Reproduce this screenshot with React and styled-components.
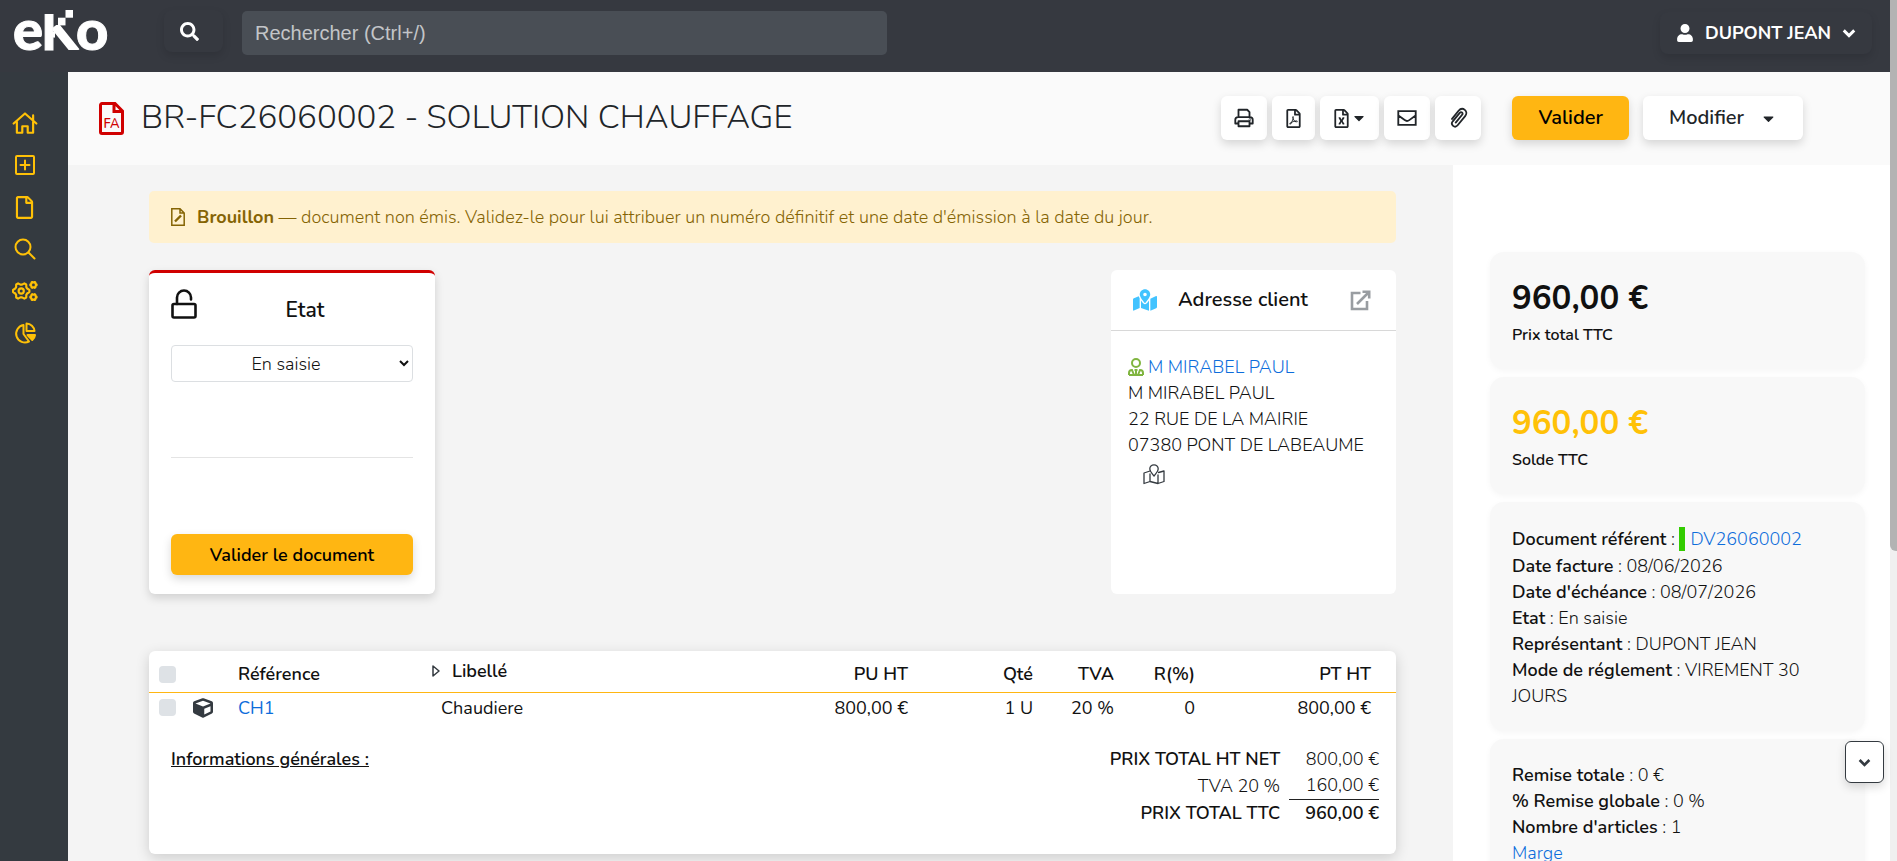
import React, { useState } from 'react';
import styled, { createGlobalStyle, css } from 'styled-components';
import {
  FaCaretDown,
  FaCube,
  FaMapMarkedAlt,
  FaRegFile,
  FaRegFileExcel,
  FaRegFilePdf,
  FaSearch,
  FaUser,
} from 'react-icons/fa';

const GlobalStyle = createGlobalStyle`
  :root {
    --dark: #343a40;
    --topbar: #363940;
    --yellow: #ffb612;
    --gold: #ffc107;
    --red: #d00000;
    --link: #0d6ddb;
    --text: #111;
  }

  *, *::before, *::after {
    box-sizing: border-box;
  }

  body {
    margin: 0;
    color: var(--text);
    background-color: #f4f4f4;
    font-family: Nunito, Lato, sans-serif;
    font-size: 18px;
    font-weight: 300;
    line-height: 26px;
  }

  button, input, select {
    font: inherit;
    color: inherit;
  }

  b {
    font-weight: 600;
  }

  a {
    color: var(--link);
    text-decoration: none;
  }

  svg {
    display: block;
    flex: none;
  }
`;

/* ---------- icons ---------- */

const Stroke = ({ size = 24, width = 2, children, ...rest }) => (
  <svg
    width={size}
    height={size}
    viewBox="0 0 24 24"
    fill="none"
    stroke="currentColor"
    strokeWidth={width}
    strokeLinejoin="round"
    strokeLinecap="round"
    aria-hidden="true"
    {...rest}
  >
    {children}
  </svg>
);

const HomeIcon = () => (
  <Stroke size={26}>
    <path d="M1.500 12.500 12 3.200l10.500 9.300M4.500 10.500V21h5v-6h5v6h5V10.500M19.500 9.500V5" />
  </Stroke>
);

const PlusSquareIcon = () => (
  <Stroke>
    <rect x="3" y="3" width="18" height="18" rx="1" />
    <path d="M12 7.500v9M7.500 12h9" />
  </Stroke>
);

const SearchIcon = () => (
  <Stroke>
    <circle cx="10" cy="10" r="7.500" />
    <path d="m15.500 15.500 6 6" />
  </Stroke>
);

const gear = (cx, cy, r, teeth) => {
  const points = [];
  for (let i = 0; i < teeth * 4; i += 1) {
    const angle = ((i - 0.5) / (teeth * 4)) * Math.PI * 2;
    const radius = i % 4 < 2 ? r : r * 0.78;
    points.push(`${(cx + radius * Math.cos(angle)).toFixed(2)} ${(cy + radius * Math.sin(angle)).toFixed(2)}`);
  }
  return `M${points.join('L')}Z`;
};

const CogsIcon = () => (
  <Stroke size={26} width={2}>
    <path d={gear(8.5, 12, 7.6, 6)} />
    <circle cx="8.500" cy="12" r="2.400" />
    <path d={gear(19.8, 6.4, 2.9, 6)} />
    <path d={gear(19.8, 17.6, 2.9, 6)} />
  </Stroke>
);

const PieIcon = () => (
  <Stroke>
    <path d="M10.500 4A8.800 8.800 0 1 0 16 20.500L10.500 13Z" />
    <path d="M13.500 2.500V10H21.500A8.300 8.300 0 0 0 13.500 2.500Z" />
    <path d="M14.500 14h7.500a8 8 0 0 1-2.700 5Z" fill="currentColor" />
  </Stroke>
);

const LockOpenIcon = () => (
  <svg width="26" height="30" viewBox="0 0 26 30" fill="none" stroke="currentColor" strokeWidth="2.600" aria-hidden="true">
    <rect x="1.500" y="15" width="23" height="13.500" rx="1.500" />
    <path d="M6 15V8.500a7 7 0 0 1 14 0V10.500" strokeLinecap="round" />
  </svg>
);

const ChevronIcon = ({ size = 14 }) => (
  <Stroke size={size} width={5} strokeLinejoin="miter" strokeLinecap="butt">
    <path d="m3 7.500 9 9 9-9" />
  </Stroke>
);

const PrintIcon = () => (
  <Stroke size={22}>
    <path d="M6 11V3h9.500L18 5.500V11M5 18H2.500v-4A3 3 0 0 1 5.500 11h13a3 3 0 0 1 3 3v4H19M6 15.500h12V21H6Z" />
    <circle cx="18.400" cy="13.600" r="0.300" />
  </Stroke>
);

const MailIcon = () => (
  <Stroke size={22} strokeLinejoin="miter">
    <path d="M2.500 4.500h19v15h-19ZM3 9.500l6.500 4.800c1.600 1.200 3.400 1.200 5 0L21 9.500" />
  </Stroke>
);

const ClipIcon = () => (
  <Stroke size={22}>
    <path d="m9 16.500 7-8.500c1.600-2-1-4-2.600-2.100l-7.600 9.200c-3 3.800 2.200 8 5.300 4.300l8.200-10c4.200-5.200-2.800-11-7.200-5.800L5 12.500" transform="translate(0.500 0.500)" />
  </Stroke>
);

const ExternalIcon = () => (
  <Stroke size={24} width={2.6} strokeLinejoin="miter" strokeLinecap="butt">
    <path d="M12.500 5H4v16h15v-8M9 16 20.500 4.500M14.500 3.800H21.200V10.500" />
  </Stroke>
);

const MapIcon = () => (
  <Stroke size={24} width={1.3}>
    <path d="M8 9 2 11v10.500l6-2 8 2 6-2V9l-5.500 1.500M8 19.500V12M16 21.500V13" />
    <path d="M12 14c-2.200-3-4.200-4.500-4.200-7a4.200 4.200 0 0 1 8.400 0c0 2.500-2 4-4.200 7Z" />
  </Stroke>
);

const ClientIcon = () => (
  <svg width="16" height="18" viewBox="0 0 16 18" fill="none" stroke="currentColor" strokeWidth="2" aria-hidden="true">
    <circle cx="8" cy="5" r="4" />
    <path d="M1 17v-2a3 3 0 0 1 3-3l2 5M15 17v-2a3 3 0 0 0-3-3l-2 5M1 17h14M8 12v4M6.500 12h3" />
  </svg>
);

const DraftIcon = () => (
  <svg width="14" height="18" viewBox="0 0 14 18" fill="none" stroke="currentColor" strokeWidth="1.500" aria-hidden="true">
    <path d="M.8.800H9L13.200 5v12.200H.8ZM9 .8V5h4.200" />
    <path d="m4 13.500 6-6" strokeWidth="2.400" />
  </svg>
);

const InvoiceIcon = () => (
  <svg width="25" height="33" viewBox="0 0 25 33" fill="none" stroke="currentColor" strokeWidth="3" aria-hidden="true">
    <path d="M3 1.500H16L23.500 9V30a1.500 1.500 0 0 1-1.500 1.500H3A1.500 1.500 0 0 1 1.500 30V3A1.500 1.500 0 0 1 3 1.500ZM15 2V9.500H23" />
    <text x="12.500" y="26" textAnchor="middle" fontSize="13" fontWeight="600" stroke="none" fill="currentColor">FA</text>
  </svg>
);

const TriangleIcon = () => (
  <svg width="8" height="12" viewBox="0 0 8 12" fill="none" stroke="var(--dark)" strokeWidth="1.500" strokeLinejoin="round" aria-hidden="true">
    <path d="M1 1v10l6-5Z" />
  </svg>
);

const Logo = () => (
  <svg width="96" height="44" viewBox="0 -1 96 44" fill="#fff" role="img" aria-label="eko">
    <defs>
      <clipPath id="logo-stem">
        <rect x="28" y="3" width="14" height="38" />
      </clipPath>
      <clipPath id="logo-leg">
        <rect x="40" y="14" width="30" height="25" />
      </clipPath>
    </defs>
    <g fontFamily="Lato, sans-serif" fontWeight="900" fontSize="56" stroke="#fff" strokeWidth="1">
      <text x="0" y="39">e</text>
      <text x="29" y="39" clipPath="url(#logo-stem)">k</text>
      <text x="63" y="39">o</text>
    </g>
    <line x1="42" y1="15" x2="63" y2="41" stroke="#fff" strokeWidth="9" clipPath="url(#logo-leg)" />
    <rect x="52.500" y="-1" width="7.500" height="7.700" />
    <rect x="45" y="6.700" width="7.500" height="7.700" />
  </svg>
);

/* ---------- page ---------- */

const MENU = [
  { label: 'Accueil', icon: <HomeIcon /> },
  { label: 'Créer', icon: <PlusSquareIcon /> },
  { label: 'Documents', icon: <FaRegFile size={23} /> },
  { label: 'Rechercher', icon: <SearchIcon /> },
  { label: 'Paramètres', icon: <CogsIcon /> },
  { label: 'Statistiques', icon: <PieIcon /> },
];

const DETAILS = [
  ['Date facture', '08/06/2026'],
  ["Date d'échéance", '08/07/2026'],
  ['Etat', 'En saisie'],
  ['Représentant', 'DUPONT JEAN'],
  ['Mode de réglement', 'VIREMENT 30 JOURS'],
];

const DISCOUNTS = [
  ['Remise totale', '0 €'],
  ['% Remise globale', '0 %'],
  ["Nombre d'articles", '1'],
];

const LINES = [
  { ref: 'CH1', label: 'Chaudiere', price: '800,00 €', qty: '1 U', vat: '20 %', discount: '0', total: '800,00 €' },
];

function TopBar() {
  return (
    <TopBarContainer>
      <LogoLink href="#"><Logo /></LogoLink>
      <DarkButton type="button" aria-label="Rechercher"><FaSearch size={19} /></DarkButton>
      <SearchInput type="search" placeholder="Rechercher (Ctrl+/)" aria-label="Rechercher" />
      <UserButton type="button">
        <FaUser size={18} />
        DUPONT JEAN
        <ChevronIcon />
      </UserButton>
    </TopBarContainer>
  );
}

function SideMenu() {
  return (
    <SideNav>
      {MENU.map(item => (
        <SideLink key={item.label} href="#" aria-label={item.label}>{item.icon}</SideLink>
      ))}
    </SideNav>
  );
}

function PageHeader() {
  return (
    <HeaderContainer>
      <InvoiceIcon />
      <h1>BR-FC26060002 - SOLUTION CHAUFFAGE</h1>
      <Tools>
        <ToolButton type="button" aria-label="Imprimer"><PrintIcon /></ToolButton>
        <ToolButton type="button" aria-label="PDF"><FaRegFilePdf size={19} /></ToolButton>
        <ToolButton type="button" aria-label="Excel"><FaRegFileExcel size={19} /><FaCaretDown size={16} /></ToolButton>
        <ToolButton type="button" aria-label="Envoyer"><MailIcon /></ToolButton>
        <ToolButton type="button" aria-label="Joindre"><ClipIcon /></ToolButton>
      </Tools>
      <ActionButton type="button" $primary>Valider</ActionButton>
      <ActionButton type="button">Modifier <FaCaretDown size={17} /></ActionButton>
    </HeaderContainer>
  );
}

function StateCard() {
  const [state, setState] = useState('saisie');
  return (
    <StateContainer>
      <StateHead>
        <LockOpenIcon />
        <h2>Etat</h2>
      </StateHead>
      <StateSelect value={state} onChange={e => setState(e.target.value)} aria-label="Etat">
        <option value="saisie">En saisie</option>
        <option value="valide">Validé</option>
      </StateSelect>
      <Divider />
      <ValidateButton type="button">Valider le document</ValidateButton>
    </StateContainer>
  );
}

function AddressCard() {
  return (
    <AddressContainer>
      <AddressHead>
        <FaMapMarkedAlt size={24} color="#42c3ff" />
        <h2>Adresse client</h2>
        <a href="#" aria-label="Ouvrir"><ExternalIcon /></a>
      </AddressHead>
      <AddressBody>
        <ClientLink href="#"><ClientIcon /> M MIRABEL PAUL</ClientLink>
        <div>M MIRABEL PAUL</div>
        <div>22 RUE DE LA MAIRIE</div>
        <div>07380 PONT DE LABEAUME</div>
        <MapLink href="#" aria-label="Voir sur la carte"><MapIcon /></MapLink>
      </AddressBody>
    </AddressContainer>
  );
}

function LinesCard() {
  return (
    <LinesContainer>
      <LinesTable>
        <colgroup>
          <col width="36" />
          <col width="45" />
          <col width="194" />
          <col />
          <col width="120" />
          <col width="125" />
          <col width="81" />
          <col width="81" />
          <col width="193" />
        </colgroup>
        <thead>
          <tr>
            <th><CheckBox type="checkbox" aria-label="Tout sélectionner" /></th>
            <th aria-label="Type" />
            <th>Référence</th>
            <th><LabelHead><TriangleIcon /> Libellé</LabelHead></th>
            <th>PU HT</th>
            <th>Qté</th>
            <th>TVA</th>
            <th>R(%)</th>
            <th>PT HT</th>
          </tr>
        </thead>
        <tbody>
          {LINES.map(line => (
            <tr key={line.ref}>
              <td><CheckBox type="checkbox" aria-label={`Sélectionner ${line.ref}`} /></td>
              <td><FaCube size={20} color="#343a40" /></td>
              <td><a href="#">{line.ref}</a></td>
              <td>{line.label}</td>
              <td>{line.price}</td>
              <td>{line.qty}</td>
              <td>{line.vat}</td>
              <td>{line.discount}</td>
              <td>{line.total}</td>
            </tr>
          ))}
        </tbody>
      </LinesTable>
      <Summary>
        <h3>Informations générales :</h3>
        <TotalsTable>
          <tbody>
            <tr><Strong>PRIX TOTAL HT NET</Strong><td>800,00 €</td></tr>
            <tr><th scope="row">TVA 20 %</th><td>160,00 €</td></tr>
            <TotalRow><Strong>PRIX TOTAL TTC</Strong><td>960,00 €</td></TotalRow>
          </tbody>
        </TotalsTable>
      </Summary>
    </LinesContainer>
  );
}

function SidePanel() {
  return (
    <PanelContainer>
      <PanelCard>
        <Amount>960,00 €</Amount>
        <AmountLabel>Prix total TTC</AmountLabel>
      </PanelCard>
      <PanelCard>
        <Amount $gold>960,00 €</Amount>
        <AmountLabel>Solde TTC</AmountLabel>
      </PanelCard>
      <PanelCard>
        <DocRow><b>Document référent</b> : <DocLink href="#">DV26060002</DocLink></DocRow>
        {DETAILS.map(([name, value]) => (
          <div key={name}><b>{name}</b> : {value}</div>
        ))}
      </PanelCard>
      <PanelCard>
        {DISCOUNTS.map(([name, value]) => (
          <div key={name}><b>{name}</b> : {value}</div>
        ))}
        <a href="#">Marge</a>
      </PanelCard>
    </PanelContainer>
  );
}

export default function App() {
  return (
    <Screen>
      <GlobalStyle />
      <Page>
        <TopBar />
        <Body>
          <SideMenu />
          <Main>
            <PageHeader />
            <Columns>
              <Content>
                <Banner>
                  <DraftIcon />
                  <p><b>Brouillon</b> — document non émis. Validez-le pour lui attribuer un numéro définitif et une date d'émission à la date du jour.</p>
                </Banner>
                <Cards>
                  <StateCard />
                  <AddressCard />
                </Cards>
                <LinesCard />
              </Content>
              <SidePanel />
            </Columns>
          </Main>
        </Body>
      </Page>
      <ScrollTrack><ScrollThumb /></ScrollTrack>
      <DownButton type="button" aria-label="Bas de page"><ChevronIcon size={13} /></DownButton>
    </Screen>
  );
}

const shadow = css`
  box-shadow: 0 4px 10px rgba(0, 0, 0, 0.15);
`;

const Screen = styled.div`
  display: flex;
  height: 100vh;
  overflow: hidden;
`;

const Page = styled.div`
  flex: 1;
  min-width: 0;
  display: flex;
  flex-direction: column;
`;

const ScrollTrack = styled.div`
  flex: none;
  width: 7px;
  background-color: #f0f0f0;
`;

const ScrollThumb = styled.div`
  height: 64%;
  background-color: #b3b3b3;
  border-radius: 0 0 0 6px;
`;

const TopBarContainer = styled.header`
  flex: none;
  display: flex;
  align-items: flex-start;
  height: 72px;
  padding: 10px 18px 0 13px;
  background-color: var(--topbar);
`;

const LogoLink = styled.a`
  flex: none;
  width: 151px;
  height: 44px;
`;

const DarkButton = styled.button`
  display: flex;
  align-items: center;
  justify-content: center;
  gap: 11px;
  width: 59px;
  height: 42px;
  padding: 0 8px 0 0;
  border: 0;
  border-radius: 8px;
  color: #fff;
  background-color: var(--topbar);
  box-shadow: 0 4px 8px rgba(0, 0, 0, 0.12);
  cursor: pointer;
`;

const SearchInput = styled.input`
  flex: 1;
  max-width: 645px;
  height: 44px;
  margin: 1px 20px 0 19px;
  padding: 0 13px;
  border: 0;
  border-radius: 5px;
  color: #fff;
  background-color: #494e55;
  font-family: "Liberation Sans", sans-serif;
  font-size: 20px;
  font-weight: 400;

  &::placeholder {
    color: #c3c5c8;
  }
`;

const UserButton = styled(DarkButton)`
  width: 212px;
  margin: 2px 0 0 auto;
  padding: 0;
  font-weight: 700;
`;

const Body = styled.div`
  flex: 1;
  min-height: 0;
  display: flex;
`;

const SideNav = styled.nav`
  flex: none;
  width: 68px;
  padding: 30px 19px 0 0;
  background-color: var(--dark);
`;

const SideLink = styled.a`
  display: flex;
  align-items: center;
  justify-content: center;
  height: 42px;
  color: var(--gold);
`;

const Main = styled.main`
  flex: 1;
  min-width: 0;
  display: flex;
  flex-direction: column;
`;

const HeaderContainer = styled.div`
  flex: none;
  display: flex;
  align-items: center;
  height: 93px;
  padding: 0 87px 1px 31px;
  background-color: #fafafa;
  color: var(--red);

  h1 {
    flex: 1;
    margin: 0 0 0 17px;
    color: #212529;
    font-size: 33px;
    font-weight: 300;
    line-height: 40px;
    white-space: nowrap;
  }
`;

const Tools = styled.div`
  display: flex;
  gap: 5px;
  margin-right: 17px;
`;

const ToolButton = styled.button`
  display: flex;
  align-items: center;
  height: 44px;
  padding: 0 12px;
  border: 0;
  border-radius: 6px;
  color: #212529;
  background-color: #fff;
  cursor: pointer;
  ${shadow}
`;

const ActionButton = styled.button`
  display: flex;
  align-items: center;
  gap: 16px;
  height: 44px;
  margin-left: 14px;
  padding: 0 26px;
  border: 0;
  border-radius: 6px;
  color: ${props => (props.$primary ? '#000' : '#212529')};
  background-color: ${props => (props.$primary ? 'var(--yellow)' : '#fff')};
  font-size: 20px;
  font-weight: 600;
  cursor: pointer;
  ${shadow}
`;

const Columns = styled.div`
  flex: 1;
  min-height: 0;
  display: flex;
`;

const Content = styled.div`
  flex: 1;
  min-width: 0;
  padding: 26px 57px 0 81px;
`;

const Banner = styled.div`
  display: flex;
  align-items: center;
  gap: 12px;
  height: 52px;
  padding: 0 22px;
  border-radius: 5px;
  color: #856404;
  background-color: #fff1cf;

  p {
    margin: 0;
  }

  b {
    font-weight: 700;
  }
`;

const Cards = styled.div`
  display: flex;
  justify-content: space-between;
  margin: 27px 0 57px;
`;

const Card = styled.section`
  border-radius: 6px;
  background-color: #fff;

  h2 {
    margin: 0;
    font-size: 21px;
    font-weight: 600;
  }
`;

const StateContainer = styled(Card)`
  display: flex;
  flex-direction: column;
  width: 286px;
  height: 324px;
  padding: 16px 22px 19px;
  border-top: 3px solid var(--red);
  ${shadow}
`;

const StateHead = styled.div`
  display: flex;
  align-items: flex-start;
  height: 56px;

  h2 {
    flex: 1;
    padding: 8px 0 0;
    text-align: center;
  }
`;

const StateSelect = styled.select`
  height: 37px;
  border: 1px solid #dcdfe2;
  border-radius: 4px;
  background-color: #fff;
  text-align-last: center;
`;

const Divider = styled.hr`
  width: 100%;
  margin: 75px 0 0;
  border: 0;
  border-top: 1px solid #e4e4e4;
`;

const ValidateButton = styled.button`
  height: 41px;
  margin-top: auto;
  border: 0;
  border-radius: 6px;
  color: #000;
  background-color: var(--yellow);
  font-weight: 600;
  cursor: pointer;
  ${shadow}
`;

const AddressContainer = styled(Card)`
  width: 285px;
`;

const AddressHead = styled.div`
  display: flex;
  align-items: center;
  height: 61px;
  padding: 0 24px 0 22px;
  border-bottom: 1px solid #d8d8d8;

  h2 {
    flex: 1;
    margin-left: 21px;
    font-size: 20px;
  }

  a {
    color: #999da1;
  }
`;

const AddressBody = styled.div`
  padding: 23px 17px;
`;

const ClientLink = styled.a`
  display: flex;
  align-items: center;
  gap: 4px;

  svg {
    color: #80b540;
  }
`;

const MapLink = styled.a`
  display: flex;
  padding: 4px 14px;
  color: var(--dark);
`;

const LinesContainer = styled(Card)`
  padding-bottom: 28px;
  box-shadow: 0 4px 14px rgba(0, 0, 0, 0.16);
`;

const LinesTable = styled.table`
  width: 100%;
  table-layout: fixed;
  border-collapse: collapse;

  th, td {
    height: 31px;
    padding: 0 8px;
    font-weight: 400;
    text-align: right;
    white-space: nowrap;
  }

  th {
    height: 41px;
    padding-top: 6px;
    border-bottom: 1px solid var(--yellow);
    font-weight: 600;
  }

  th:nth-child(-n + 4), td:nth-child(-n + 4) {
    text-align: left;
  }

  th:first-child, td:first-child {
    padding-left: 10px;
  }

  td:nth-child(4) {
    padding-left: 17px;
  }

  th:last-child, td:last-child {
    padding-right: 25px;
  }
`;

const LabelHead = styled.div`
  display: flex;
  align-items: center;
  gap: 12px;
  padding-bottom: 6px;
`;

const CheckBox = styled.input`
  display: block;
  appearance: none;
  width: 17px;
  height: 17px;
  margin: 0;
  border-radius: 4px;
  background-color: #dee2e6;

  &:checked {
    background-color: var(--yellow);
  }
`;

const Summary = styled.div`
  display: flex;
  align-items: flex-start;
  justify-content: space-between;
  padding: 22px 17px 0 22px;

  h3 {
    margin: 0;
    font-size: 18px;
    font-weight: 600;
    line-height: 28px;
    text-decoration: underline;
  }
`;

const TotalsTable = styled.table`
  border-collapse: collapse;

  th, td {
    height: 27px;
  }

  th {
    padding: 0 9px 0 0;
    font-weight: 300;
    text-align: right;
  }

  td {
    padding: 0 0 0 16px;
    text-align: right;
  }
`;

const Strong = styled.th.attrs({ scope: 'row' })`
  && {
    font-weight: 600;
  }
`;

const TotalRow = styled.tr`
  td {
    border-top: 1px solid #222;
    font-weight: 600;
  }
`;

const PanelContainer = styled.aside`
  flex: none;
  width: 437px;
  padding: 87px 25px 0 37px;
  overflow: hidden;
  background-color: #fff;
`;

const PanelCard = styled.section`
  margin-bottom: 8px;
  padding: 23px 22px 22px;
  border-radius: 14px;
  background-color: #f8f8f8;
  box-shadow: 0 2px 6px rgba(0, 0, 0, 0.04);
`;

const Amount = styled.div`
  color: ${props => (props.$gold ? 'var(--gold)' : 'var(--text)')};
  font-size: 33px;
  font-weight: 700;
  line-height: 48px;
`;

const AmountLabel = styled.div`
  font-size: 16px;
  font-weight: 600;
  line-height: 24px;
`;

const DocRow = styled.div`
  line-height: 28px;
`;

const DocLink = styled.a`
  padding-left: 5px;
  border-left: 6px solid #3c0;
  white-space: nowrap;
`;

const DownButton = styled.button`
  position: fixed;
  right: 13px;
  bottom: 78px;
  display: flex;
  align-items: center;
  justify-content: center;
  width: 39px;
  height: 42px;
  border: 1px solid var(--dark);
  border-radius: 6px;
  color: var(--dark);
  background-color: #fff;
  cursor: pointer;
  ${shadow}
`;
